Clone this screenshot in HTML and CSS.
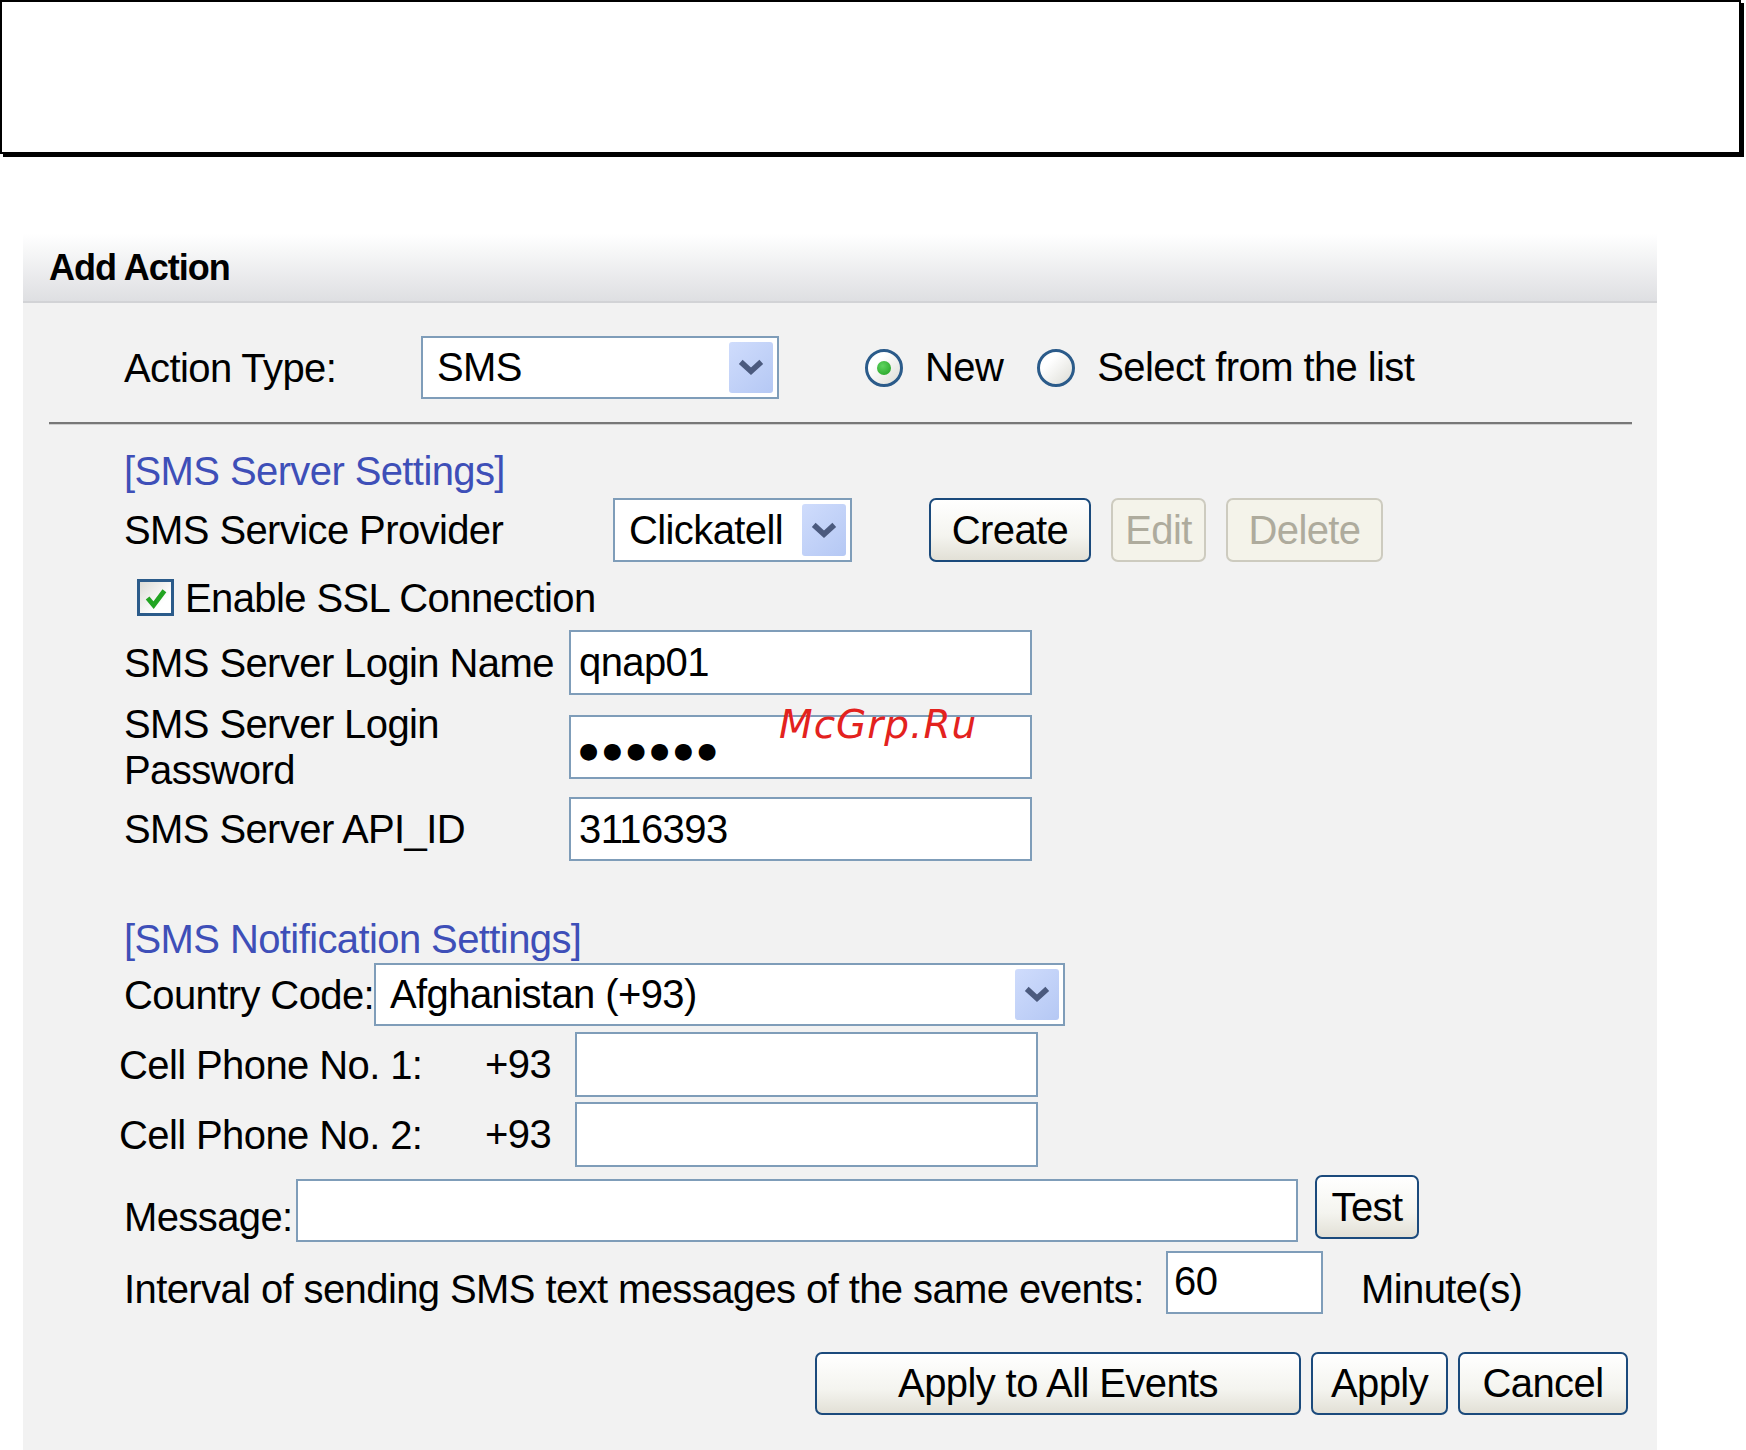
FILE: index.html
```html
<!DOCTYPE html>
<html>
<head>
<meta charset="utf-8">
<title>Add Action</title>
<link rel="stylesheet" href="styles.css">
</head>
<body>
<div class="topbox"></div>

<div class="panel">
  <div class="panel-head">Add Action</div>
  <div class="panel-body">

    <div class="row row-type">
      <span class="lbl lbl-type">Action Type:</span>
      <div class="select sel-type">
        <span class="sel-text">SMS</span>
        <span class="sel-btn"><svg viewBox="0 0 30 20" width="28" height="19"><polyline points="4,4 15,14 26,4" fill="none" stroke="#4b5a7e" stroke-width="6"/></svg></span>
      </div>
      <label class="radio-item ri-first"><span class="radio checked"><span class="dot"></span></span>New</label>
      <label class="radio-item ri-second"><span class="radio"></span>Select from the list</label>
    </div>

    <div class="sep"></div>

    <div class="section-title st-first">[SMS Server Settings]</div>

    <div class="row row-provider">
      <span class="lbl lbl-provider">SMS Service Provider</span>
      <div class="select sel-provider">
        <span class="sel-text">Clickatell</span>
        <span class="sel-btn"><svg viewBox="0 0 30 20" width="28" height="19"><polyline points="4,4 15,14 26,4" fill="none" stroke="#4b5a7e" stroke-width="6"/></svg></span>
      </div>
      <button class="btn btn-create">Create</button>
      <button class="btn btn-edit" disabled>Edit</button>
      <button class="btn btn-delete" disabled>Delete</button>
    </div>

    <div class="row row-ssl">
      <span class="checkbox"><svg viewBox="0 0 20 20" width="24" height="24"><polyline points="3,10 8,16 17,4" fill="none" stroke="#22a422" stroke-width="4"/></svg></span>
      <span class="ssl-label">Enable SSL Connection</span>
    </div>

    <div class="row row-field rf-login">
      <span class="lbl lbl-field">SMS Server Login Name</span>
      <div class="input in-field"><span class="in-text">qnap01</span></div>
    </div>

    <div class="row row-field rf-pass">
      <span class="lbl lbl-field lbl-two">SMS Server Login<br>Password</span>
      <div class="input in-field"><span class="in-text dots">●●●●●●</span></div>
    </div>

    <div class="row row-field rf-api">
      <span class="lbl lbl-field">SMS Server API_ID</span>
      <div class="input in-field"><span class="in-text in-api">3116393</span></div>
    </div>

    <div class="section-title st-second">[SMS Notification Settings]</div>

    <div class="row row-country">
      <span class="lbl lbl-country">Country Code:</span>
      <div class="select sel-country">
        <span class="sel-text">Afghanistan (+93)</span>
        <span class="sel-btn"><svg viewBox="0 0 30 20" width="28" height="19"><polyline points="4,4 15,14 26,4" fill="none" stroke="#4b5a7e" stroke-width="6"/></svg></span>
      </div>
    </div>

    <div class="row row-cell rc-1">
      <span class="lbl lbl-cell">Cell Phone No. 1:</span>
      <span class="prefix">+93</span>
      <div class="input in-cell"></div>
    </div>

    <div class="row row-cell rc-2">
      <span class="lbl lbl-cell">Cell Phone No. 2:</span>
      <span class="prefix">+93</span>
      <div class="input in-cell"></div>
    </div>

    <div class="row row-message">
      <span class="lbl lbl-message">Message:</span>
      <div class="input in-message"></div>
      <button class="btn btn-test">Test</button>
    </div>

    <div class="row row-interval">
      <span class="lbl lbl-interval">Interval of sending SMS text messages of the same events:</span>
      <div class="input in-interval"><span class="in-text in-60">60</span></div>
      <span class="unit">Minute(s)</span>
    </div>

    <div class="row row-actions">
      <button class="btn btn-all">Apply to All Events</button>
      <button class="btn btn-apply">Apply</button>
      <button class="btn btn-cancel">Cancel</button>
    </div>

  </div>
</div>

<div class="watermark">McGrp.Ru</div>
</body>
</html>
```

FILE: styles.css
```css
html, body {
  margin: 0;
  padding: 0;
  background: #ffffff;
}

body {
  font-family: "Liberation Sans", Arial, sans-serif;
  font-size: 40px;
  letter-spacing: -0.6px;
  color: #000;
  width: 1746px;
  height: 1450px;
  overflow: hidden;
}

.topbox {
  box-sizing: border-box;
  width: 1741px;
  height: 154px;
  border: 2px solid #000;
  box-shadow: 3px 3px 0 #000;
  background: #fff;
}

.panel {
  margin: 80px 0 0 23px;
  width: 1634px;
  height: 1216px;
  background: #f2f2f2;
}

.panel-head {
  box-sizing: border-box;
  height: 69px;
  line-height: 67px;
  padding-left: 26px;
  font-weight: bold;
  font-size: 36px;
  letter-spacing: -1px;
  background: linear-gradient(#ffffff, #dedfe2);
  border-bottom: 2px solid #d2d3d6;
}

.panel-body {
  padding: 0 25px 0 26px;
}

.row {
  display: flex;
  align-items: center;
  margin-left: 75px;
}

.lbl {
  flex: none;
  line-height: 46px;
  white-space: nowrap;
}

/* generic controls */
.select, .input {
  box-sizing: border-box;
  position: relative;
  flex: none;
  background: #fff;
  border: 2px solid #7f9db9;
  display: flex;
  align-items: center;
}

.sel-text {
  padding-left: 14px;
  white-space: nowrap;
}

.sel-btn {
  position: absolute;
  right: 4px;
  top: 4px;
  bottom: 4px;
  width: 44px;
  border-radius: 3px;
  background: linear-gradient(135deg, #cfdcfc, #b5c8f4);
  display: flex;
  align-items: center;
  justify-content: center;
}

.in-text {
  padding-left: 8px;
  white-space: nowrap;
}

.btn {
  box-sizing: border-box;
  flex: none;
  font-family: "Liberation Sans", Arial, sans-serif;
  font-size: 40px;
  letter-spacing: -0.6px;
  color: #000;
  border: 2px solid #1b4a7c;
  border-radius: 7px;
  background: linear-gradient(#ffffff 0%, #f4f4ef 60%, #e2e0d6 100%);
  padding: 0;
  margin: 0;
}

.btn:disabled {
  border-color: #cdcbbf;
  background: #f4f3ea;
  color: #aeab9d;
}

/* row 1 */
.row-type {
  margin-top: 33px;
  height: 63px;
}

.lbl-type { width: 297px; }

.sel-type { width: 358px; height: 63px; }

.radio-item {
  display: flex;
  align-items: center;
  white-space: nowrap;
}

.ri-first { margin-left: 86px; }
.ri-second { margin-left: 34px; }

.radio {
  box-sizing: border-box;
  width: 38px;
  height: 38px;
  border-radius: 50%;
  border: 3px solid #2b5b8a;
  background: linear-gradient(135deg, #ffffff 30%, #dcdcd5);
  margin-right: 22px;
  display: flex;
  align-items: center;
  justify-content: center;
}

.dot {
  width: 14px;
  height: 14px;
  border-radius: 50%;
  background: radial-gradient(circle at 40% 35%, #5fd35f, #1f9f1f);
}

.sep {
  margin-top: 23px;
  height: 2px;
  background: #787878;
  border-bottom: 1px solid #cfcfcf;
}

.section-title {
  margin-left: 75px;
  color: #3e4fb8;
  line-height: 46px;
  white-space: nowrap;
}

.st-first { margin-top: 23px; }
.st-second { margin-top: 55px; }

/* provider row */
.row-provider {
  margin-top: 4px;
  height: 64px;
}

.lbl-provider { width: 489px; }

.sel-provider { width: 239px; height: 64px; }

.btn-create { margin-left: 77px; width: 162px; height: 64px; }
.btn-edit { margin-left: 20px; width: 95px; height: 64px; }
.btn-delete { margin-left: 20px; width: 157px; height: 64px; }

/* ssl row */
.row-ssl {
  margin-top: 16px;
  height: 39px;
}

.checkbox {
  box-sizing: border-box;
  flex: none;
  width: 37px;
  height: 37px;
  margin-left: 13px;
  border: 3px solid #2b5b8a;
  background: linear-gradient(135deg, #dcdcd6, #ffffff 70%);
  display: flex;
  align-items: center;
  justify-content: center;
}

.ssl-label {
  margin-left: 11px;
  line-height: 46px;
  white-space: nowrap;
}

/* server fields */
.row-field { height: 65px; }
.rf-login { margin-top: 13px; }
.rf-pass { margin-top: 6px; height: 92px; }
.rf-api { margin-top: 4px; height: 64px; }

.lbl-field { width: 445px; }

.in-field { width: 463px; height: 65px; }
.rf-pass .in-field { height: 64px; }
.rf-api .in-field { height: 64px; }

.dots {
  font-family: "DejaVu Sans", sans-serif;
  font-size: 22px;
  letter-spacing: 4.5px;
  padding-left: 8px;
  padding-top: 6px;
}

/* notification */
.row-country {
  margin-top: 1px;
  height: 63px;
}

.lbl-country { width: 250px; }

.sel-country { width: 691px; height: 63px; }

.row-cell { height: 65px; }
.rc-1 { margin-top: 6px; }
.rc-2 { margin-top: 5px; }

.lbl-cell {
  width: 366px;
  margin-left: -5px;
}

.prefix {
  flex: none;
  width: 90px;
  white-space: nowrap;
}

.in-cell { width: 463px; height: 65px; }

.row-message {
  margin-top: 8px;
  height: 67px;
  align-items: flex-start;
}

.lbl-message {
  width: 172px;
  margin-top: 19px;
}

.in-message {
  width: 1002px;
  height: 63px;
  margin-top: 4px;
}

.btn-test {
  margin-left: 17px;
  width: 104px;
  height: 64px;
}

.row-interval {
  margin-top: 9px;
  height: 63px;
  align-items: flex-start;
}

.lbl-interval {
  margin-top: 15px;
  width: 1042px;
}

.in-interval {
  width: 157px;
  height: 63px;
  align-items: flex-start;
}

.in-60 {
  padding-left: 6px;
  line-height: 56px;
}

.unit {
  margin-left: 38px;
  margin-top: 15px;
  line-height: 46px;
  white-space: nowrap;
}

.row-actions {
  margin-top: 38px;
  height: 63px;
  justify-content: flex-end;
  margin-right: 4px;
  gap: 10px;
}

.btn-all { width: 486px; height: 63px; }
.btn-apply { width: 137px; height: 63px; }
.btn-cancel { width: 170px; height: 63px; }

.watermark {
  position: absolute;
  left: 779px;
  top: 702px;
  font-family: "DejaVu Sans", sans-serif;
  font-style: italic;
  font-size: 39px;
  letter-spacing: 1px;
  color: #e3221e;
  white-space: nowrap;
}
```
